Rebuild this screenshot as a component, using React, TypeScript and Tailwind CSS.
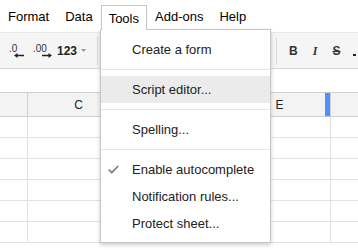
import { Fragment } from "react";

const font = { fontFamily: '"Liberation Sans", Arial, sans-serif' };

const menuTabs = ["Format", "Data", "Tools", "Add-ons", "Help"];

type Item = { label: string; checked?: boolean; active?: boolean; sep?: boolean };

const items: Item[] = [
    { label: "Create a form", sep: true },
    { label: "Script editor...", active: true, sep: true },
    { label: "Spelling...", sep: true },
    { label: "Enable autocomplete", checked: true },
    { label: "Notification rules..." },
    { label: "Protect sheet..." },
];

const rows = [0, 1, 2, 3, 4, 5];

const DecimalIcon = ({ text, dir }: { text: string; dir: "left" | "right" }) => (
    <div className="relative h-[16px] text-[10px] leading-none text-[#333]" style={{ width: dir === "left" ? 16 : 19 }}>
        <span className="absolute left-0 top-[1px]">{text}</span>
        <svg className="absolute top-[10px]" style={{ left: dir === "left" ? 5 : 9 }} width="10" height="5" viewBox="0 0 10 5">
            {dir === "left" ? (
                <path d="M0 2.5 L3.5 0 V1.8 H10 V3.2 H3.5 V5 Z" fill="#222" />
            ) : (
                <path d="M10 2.5 L6.5 0 V1.8 H0 V3.2 H6.5 V5 Z" fill="#222" />
            )}
        </svg>
    </div>
);

export default function App() {
    return (
        <div className="relative w-[358px] h-[250px] overflow-hidden bg-white" style={font}>
            {/* menu bar */}
            <div className="h-[32px] flex items-center pl-[8px] pt-[2px] gap-[16px] text-[13px] text-black">
                {menuTabs.map((t) =>
                    t === "Tools" ? (
                        <span
                            key={t}
                            className="relative z-10 self-start mt-[3px] h-[25px] -mx-[8px] px-[7px] flex items-center pt-[2px] bg-white border-x border-t border-[#c6c6c6]"
                        >
                            {t}
                        </span>
                    ) : (
                        <span key={t}>{t}</span>
                    )
                )}
            </div>

            {/* toolbar */}
            <div className="h-[37px] flex items-center bg-[#f5f5f5] border-y border-t-[#e8e8e8] border-b-[#d9d9d9]">
                <div className="ml-[9px] flex items-center">
                    <DecimalIcon text=".0" dir="left" />
                    <div className="ml-[8px]">
                        <DecimalIcon text=".00" dir="right" />
                    </div>
                    <span className="ml-[5px] text-[12px] font-bold text-[#222] leading-none">123</span>
                    <svg className="ml-[4px]" width="5" height="3" viewBox="0 0 5 3">
                        <path d="M0 0 H5 L2.5 3 Z" fill="#999" />
                    </svg>
                </div>
                <div className="ml-[11px] w-px h-[28px] bg-[#dadada]" />
                <div className="ml-[178px] w-px h-[28px] bg-[#dadada]" />
                <div className="ml-[12px] flex items-center gap-[15px] text-[#333] leading-none">
                    <span className="text-[12px] font-bold">B</span>
                    <span className="text-[12px] font-bold italic" style={{ fontFamily: '"Liberation Serif", serif' }}>I</span>
                    <span className="text-[12px] font-bold line-through">S</span>
                    <span className="-ml-[2px] mt-[8px] w-[3px] h-[2px] bg-[#222]" />
                </div>
            </div>

            {/* formula row */}
            <div className="h-[23px]" />

            {/* column headers */}
            <div className="h-[25px] flex bg-[#f3f3f3] border-y border-[#cfcfcf] text-[12px] text-[#222]">
                <div className="w-[28px] border-r border-[#cfcfcf]" />
                <div className="w-[102px] border-r border-[#cfcfcf] flex items-center justify-center">C</div>
                <div className="w-[101px] border-r border-[#cfcfcf] flex items-center justify-center">D</div>
                <div className="w-[100px] border-r border-[#cfcfcf] flex items-center">
                    <span className="flex-1 pl-[3px] text-center">E</span>
                    <span className="w-[5px] h-full bg-[#4d90fe]" />
                </div>
                <div className="flex-1" />
            </div>

            {/* grid */}
            {rows.map((r) => (
                <div key={r} className="h-[21px] flex border-b border-[#e2e2e2]">
                    <div className="w-[28px] border-r border-[#e2e2e2]" />
                    <div className="w-[102px] border-r border-[#e2e2e2]" />
                    <div className="w-[101px] border-r border-[#e2e2e2]" />
                    <div className="w-[100px] border-r border-[#e2e2e2]" />
                    <div className="flex-1" />
                </div>
            ))}

            {/* Tools dropdown */}
            <div className="absolute z-0 left-[100px] top-[29px] w-[171px] h-[214px] bg-white border border-[#c6c6c6] shadow-[0_2px_4px_rgba(0,0,0,0.2)] pt-[6px] pb-[5px] text-[13px] text-[#222]">
                {items.map((it) => (
                    <Fragment key={it.label}>
                        <div className={`relative h-[27px] flex items-center pl-[31px] ${it.active ? "bg-[#ebebeb]" : ""}`}>
                            {it.checked && (
                                <svg className="absolute left-[7px] top-[9px]" width="11" height="9" viewBox="0 0 11 9">
                                    <path d="M0.8 4.6 L3.8 7.6 L10.2 1" stroke="#777" strokeWidth="1.5" fill="none" />
                                </svg>
                            )}
                            {it.label}
                        </div>
                        {it.sep && <div className="my-[6px] h-px bg-[#e5e5e5]" />}
                    </Fragment>
                ))}
            </div>
        </div>
    );
}
